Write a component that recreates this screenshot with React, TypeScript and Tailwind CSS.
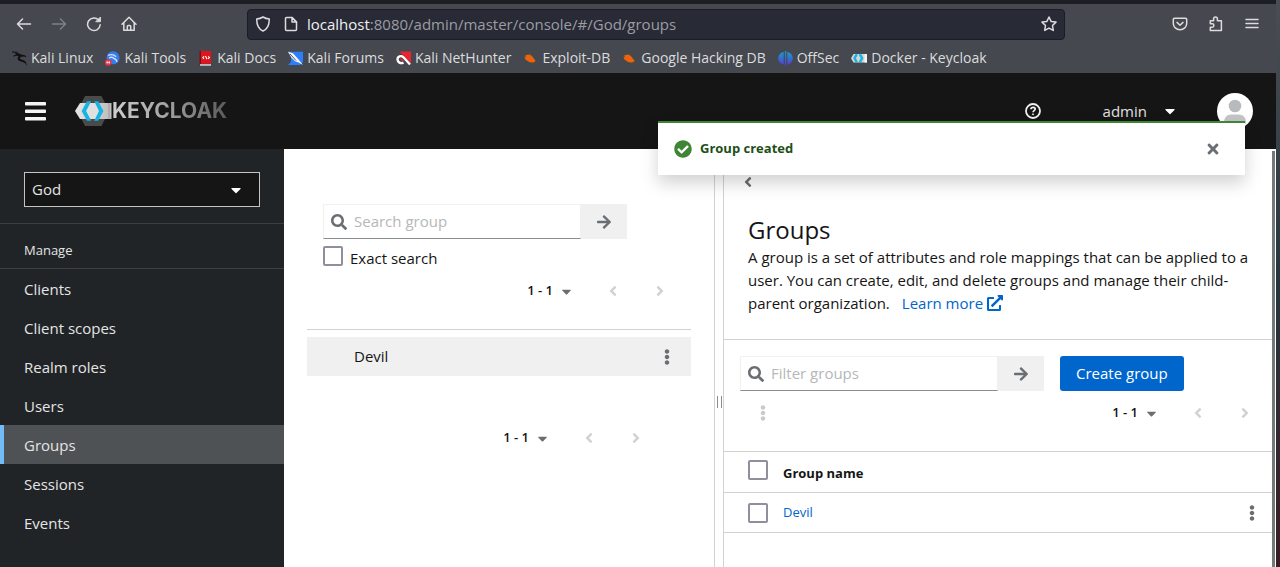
import React from "react";
import {
  FaAngleLeft,
  FaAngleRight,
  FaArrowRight,
  FaCaretDown,
  FaCheckCircle,
  FaEllipsisV,
  FaExternalLinkAlt,
  FaSearch,
  FaTimes,
} from "react-icons/fa";

type IconProps = { className?: string };

const stroke = {
  fill: "none",
  stroke: "currentColor",
  strokeWidth: 1.5,
  strokeLinecap: "round" as const,
  strokeLinejoin: "round" as const,
};

function BackIcon({ className = "size-4" }: IconProps) {
  return (
    <svg viewBox="0 0 16 16" className={className} {...stroke} aria-hidden="true">
      <path d="M14.5 8H1.5M6.5 3L1.5 8l5 5" />
    </svg>
  );
}

function ForwardIcon({ className = "size-4" }: IconProps) {
  return (
    <svg viewBox="0 0 16 16" className={className} {...stroke} aria-hidden="true">
      <path d="M1.5 8h13M9.5 3l5 5-5 5" />
    </svg>
  );
}

function ReloadIcon() {
  return (
    <svg viewBox="0 0 16 16" className="size-4" {...stroke} aria-hidden="true">
      <path d="M12.6 4A6.3 6.3 0 1 0 14.2 8.8" />
      <path d="M14.4 1.4v4.3h-4.3z" fill="currentColor" strokeWidth="1" />
    </svg>
  );
}

function HomeIcon() {
  return (
    <svg viewBox="0 0 16 16" className="size-4" {...stroke} aria-hidden="true">
      <path d="M1 8.2L8 1.3l7 6.9" />
      <path d="M2.8 7v7.3h10.4V7" />
      <path d="M6.3 14v-3.6a1 1 0 0 1 1-1h1.4a1 1 0 0 1 1 1V14" />
    </svg>
  );
}

function ShieldIcon() {
  return (
    <svg viewBox="0 0 16 16" className="size-4" {...stroke} aria-hidden="true">
      <path d="M8 1c2 1.3 4.200 1.900 6.300 2.100C14.300 9 12 13.500 8 15 4 13.500 1.700 9 1.700 3.100 3.800 2.900 6 2.300 8 1z" />
    </svg>
  );
}

function PageIcon() {
  return (
    <svg viewBox="0 0 16 16" className="size-4" {...stroke} aria-hidden="true">
      <path d="M9 1.500H3.500a1 1 0 0 0-1 1v11a1 1 0 0 0 1 1h9a1 1 0 0 0 1-1V6z" />
      <path d="M9 1.500V6h4.500z" />
    </svg>
  );
}

function StarIcon() {
  return (
    <svg viewBox="0 0 16 16" className="size-4" {...stroke} aria-hidden="true">
      <path d="M8 1l2.100 4.400 4.900.7-3.500 3.400.8 4.900L8 12.100l-4.300 2.300.8-4.900L1 6.100l4.900-.7z" />
    </svg>
  );
}

function PocketIcon() {
  return (
    <svg viewBox="0 0 16 16" className="size-4" {...stroke} aria-hidden="true">
      <path d="M2.500 2.300h11a1.200 1.200 0 0 1 1.200 1.200v4a6.700 6.200 0 0 1-13.400 0v-4a1.200 1.200 0 0 1 1.200-1.200z" />
      <path d="M5 6.400l3 2.800 3-2.800" />
    </svg>
  );
}

function PuzzleIcon() {
  return (
    <svg viewBox="0 0 16 16" className="size-4" {...stroke} aria-hidden="true">
      <path d="M5.600 4.700V2.900a1.900 1.900 0 0 1 3.800 0v1.800h4v9.800H2.300v-3.300h1.900a1.700 1.700 0 0 0 0-3.400H2.300V4.700z" />
    </svg>
  );
}

function MenuIcon() {
  return (
    <svg viewBox="0 0 16 16" className="size-4" {...stroke} aria-hidden="true">
      <path d="M2 3.500h12M2 7.500h12M2 11.500h12" />
    </svg>
  );
}

function KaliIcon() {
  return (
    <svg viewBox="0 0 15 15" className="size-[15px]" aria-hidden="true">
      <path d="M0 1l5.500.2M1.500 5.300l2.500-1.300 3 .4" fill="none" stroke="#111214" strokeWidth="1.100" />
      <path d="M2.500 1.300l4 1 3.500 1.400 3 .6 1.600 1.900-2.800-.6-2 .2c-1.800.2-2.300 1.400-1.500 2.300l4 1.300c1.600.7 2.300 2.800 2.600 5.600-1-2-2-3.200-3.600-3.800L7.500 10C5.200 8.900 5 6.600 6.500 5.200L4.500 4z" fill="#111214" />
    </svg>
  );
}

function ToolsIcon() {
  return (
    <svg viewBox="0 0 15 15" className="size-[15px]" aria-hidden="true">
      <circle cx="8" cy="6.800" r="6.500" fill="#367bf0" />
      <path d="M3 4.500c3-1.300 6-1 8 1.200M4 7c2.500-1.500 4-.5 5 .5 1.500.3 2.600 1.500 3 3.500" fill="none" stroke="#cfe0ff" strokeWidth="1.300" />
      <rect x="0" y="8.300" width="6.500" height="6.500" rx="3" fill="#e8343f" />
      <path d="M2.200 10.200v2.500M4.300 10.200v2.500M1.500 11.400H5" stroke="#fff" strokeWidth=".7" />
    </svg>
  );
}

function DocsIcon() {
  return (
    <svg viewBox="0 0 15 15" className="size-[15px]" aria-hidden="true">
      <path d="M1.500 0h2v14h-2z" fill="#7c1016" />
      <path d="M3 0h10v12.800H3z" fill="#e0141c" />
      <path d="M2 13.200h11v1.500H2z" fill="#d8d8d8" />
      <path d="M6 5.300L4.800 6.600 6 8M10.200 5.300l1.200 1.300L10.200 8M7 5.200c1.200.2 1 1.300 2 2.900" fill="none" stroke="#fff" strokeWidth="1.100" />
    </svg>
  );
}

function ForumsIcon() {
  return (
    <svg viewBox="0 0 15 15" className="size-[15px]" aria-hidden="true">
      <path d="M0 .7h15v10.300l-3 3H0l3-3V5z" fill="#2a7fff" />
      <path d="M0 .7l5 1.600 5.200 5.700 4.800 6-4.500-2.600-3.500-1.200L3.300 6.400z" fill="#f4f4f4" />
      <path d="M2 3l6 6.500" stroke="#3c3f46" strokeWidth=".9" />
    </svg>
  );
}

function NetHunterIcon() {
  return (
    <svg viewBox="0 0 15 15" className="size-[15px]" aria-hidden="true">
      <path d="M3.500.5H15v12z" fill="#e8262f" />
      <path d="M14 13.500L7.500 6.300C5 4 1.500 5.400 1.500 8.400c.1 3 3 4.500 6 3.200" fill="none" stroke="#fff" strokeWidth="2.300" />
      <path d="M4.300 7.700l3 2.300" stroke="#e8262f" strokeWidth="1.700" />
    </svg>
  );
}

function ExploitIcon() {
  return (
    <svg viewBox="0 0 15 15" className="size-[15px]" aria-hidden="true">
      <path d="M1.500 6l1.500-2 4.500-.5 2 2.300 3.200 4.200-2.700 1.800-4-.8-3.500-2.500z" fill="#e8650e" />
      <path d="M7 3.500l2.500 1.300M1 5l2 .8M9.500 12l3-.4" stroke="#7a4320" strokeWidth=".8" />
    </svg>
  );
}

function OffSecIcon() {
  return (
    <svg viewBox="0 0 15 15" className="size-[15px]" aria-hidden="true">
      <defs>
        <linearGradient id="offsec" x1="0" y1="0" x2="0" y2="15" gradientUnits="userSpaceOnUse">
          <stop offset="0" stopColor="#12a5c8" />
          <stop offset="1" stopColor="#5a35d6" />
        </linearGradient>
      </defs>
      <g fill="url(#offsec)">
        <path d="M5.700 1v12.500C2.300 13 .3 10.500.3 7.300S2.300 1.600 5.700 1z" />
        <path d="M9.300 1c3.400.6 5.400 3.100 5.400 6.300s-2 5.700-5.400 6.200z" />
        <path d="M6.900 0h1.300v15H6.900z" />
      </g>
    </svg>
  );
}

function DockerIcon() {
  return (
    <svg viewBox="0 0 16 15" className="h-[15px] w-4" aria-hidden="true">
      <path d="M2.500 3H16v8.500H2.500L0 7.300z" fill="#d6d6d6" />
      <path d="M5.800 3.200L3.500 7.300l2.300 4.100M8.800 3.200l2.300 4.100-2.300 4.100" fill="none" stroke="#19b5e0" strokeWidth="2.400" />
      <path d="M13.500 3H16v8.500h-2.500z" fill="#f4f4f4" />
    </svg>
  );
}

const bookmarks = [
  { label: "Kali Linux", Icon: KaliIcon },
  { label: "Kali Tools", Icon: ToolsIcon },
  { label: "Kali Docs", Icon: DocsIcon },
  { label: "Kali Forums", Icon: ForumsIcon },
  { label: "Kali NetHunter", Icon: NetHunterIcon },
  { label: "Exploit-DB", Icon: ExploitIcon },
  { label: "Google Hacking DB", Icon: ExploitIcon },
  { label: "OffSec", Icon: OffSecIcon },
  { label: "Docker - Keycloak", Icon: DockerIcon },
];

function BrowserChrome() {
  return (
    <div className="border-t-4 border-[#1c1e24] bg-[#45484f] text-[#dcdcde]">
      <div className="flex h-10 items-center">
        <div className="flex w-[247px] shrink-0 items-center gap-[19px] pl-4">
          <button type="button" aria-label="Back"><BackIcon /></button>
          <button type="button" aria-label="Forward" disabled className="text-[#7d8087]"><ForwardIcon /></button>
          <button type="button" aria-label="Reload"><ReloadIcon /></button>
          <button type="button" aria-label="Home"><HomeIcon /></button>
        </div>
        <div className="flex h-[31px] min-w-0 flex-1 items-center rounded-sm border border-[#1b1c25] bg-[#282a36] px-[7px]">
          <ShieldIcon />
          <span className="ml-3"><PageIcon /></span>
          <p className="ml-2 flex-1 truncate text-[15px] text-[#9c9da3]">
            <span className="text-[#f0f0f2]">localhost</span>:8080/admin/master/console/#/God/groups
          </p>
          <button type="button" aria-label="Bookmark this page"><StarIcon /></button>
        </div>
        <div className="flex w-[211px] shrink-0 items-center justify-end gap-5 pr-4">
          <button type="button" aria-label="Save to Pocket"><PocketIcon /></button>
          <button type="button" aria-label="Extensions"><PuzzleIcon /></button>
          <button type="button" aria-label="Application menu"><MenuIcon /></button>
        </div>
      </div>
      <nav aria-label="Bookmarks" className="flex h-[29px] items-center gap-3 pb-px pl-3 text-sm">
        {bookmarks.map(({ label, Icon }) => (
          <a key={label} href="#" className="flex items-center gap-1 whitespace-nowrap">
            <Icon />
            {label}
          </a>
        ))}
      </nav>
    </div>
  );
}

function KeycloakLogo() {
  return (
    <a href="#" aria-label="Keycloak home" className="flex items-center">
      <svg viewBox="0 0 37 30" className="h-[30px] w-[37px]" aria-hidden="true">
        <defs>
          <linearGradient id="band" x1="0" y1="0" x2="1" y2="0">
            <stop offset="0" stopColor="#e6e6e6" />
            <stop offset="1" stopColor="#bdbdbd" />
          </linearGradient>
        </defs>
        <path d="M10 0h16.500l7.500 15-7.500 15H10L2.500 15z" fill="#4a4a4a" />
        <path d="M5 7h31.500v16H5L0 15z" fill="url(#band)" />
        <path d="M13.500 7h9l4.500 8-4.500 8h-9L9 15z" fill="#e0e0e0" />
        <path d="M12 5.300h4.200L11.100 15l5.100 9.700H12L6.600 15z" fill="#16b4e2" />
        <path d="M19.200 5.300h4L28.500 15l-5.300 9.700h-4L24 15z" fill="#16b4e2" />
        <path d="M33.500 7h1v16h-1z" fill="#9a9a9a" />
      </svg>
      <span className="bg-linear-to-r from-[#cfcfcf] via-[#a0a0a0] to-[#5a5a5a] bg-clip-text font-['Inter',sans-serif] text-[21px] leading-7 font-bold text-transparent">
        KEYCLOAK
      </span>
    </a>
  );
}

function Toast() {
  return (
    <div
      role="status"
      className="absolute top-12 right-[31px] z-10 flex h-[54px] w-[587px] items-center border-t-2 border-[#3e8635] bg-white px-4 shadow-[0_8px_16px_rgba(3,3,3,0.18)]"
    >
      <FaCheckCircle className="size-[18px] text-[#3e8635]" />
      <p className="ml-2 flex-1 text-[13px] font-bold text-[#1e4f18]">Group created</p>
      <button type="button" aria-label="Close" className="px-2 text-[#6a6e73]">
        <FaTimes className="size-4" />
      </button>
    </div>
  );
}

function Masthead() {
  return (
    <header className="relative flex h-[76px] shrink-0 items-center bg-[#151515] pr-[23px] pl-6 text-[#e0e0e0]">
      <button type="button" aria-label="Toggle navigation" className="mr-[29px]">
        <svg viewBox="0 0 22 20" className="h-5 w-[22px]" fill="#f5f5f5" aria-hidden="true">
          <rect x="1" y="1" width="21" height="3.500" rx=".8" />
          <rect x="1" y="8.500" width="21" height="3.500" rx=".8" />
          <rect x="1" y="16" width="21" height="3.500" rx=".8" />
        </svg>
      </button>
      <KeycloakLogo />
      <div className="ml-auto flex items-center">
        <button type="button" aria-label="Help">
          <svg viewBox="0 0 16 16" className="size-4" fill="none" stroke="#f0f0f0" aria-hidden="true">
            <circle cx="8" cy="8" r="7" strokeWidth="1.800" />
            <path d="M5.900 6.300C6 5 6.900 4.300 8.100 4.300c1.200 0 2.100.7 2.100 1.800C10.200 7.600 8 7.600 8 9.300" strokeWidth="1.700" />
            <circle cx="8" cy="11.300" r=".6" fill="#f0f0f0" strokeWidth=".8" />
          </svg>
        </button>
        <button type="button" className="ml-[62px] flex items-center gap-[15px] text-[15px]">
          admin
          <FaCaretDown className="size-4 text-white" />
        </button>
        <svg viewBox="0 0 36 36" className="ml-[39px] size-9" role="img" aria-label="User avatar">
          <circle cx="18" cy="18" r="18" fill="#fff" />
          <circle cx="18" cy="13" r="6.300" fill="#b8bbbe" />
          <path d="M7 30c0-5 2.500-8.500 7-8.500h8c4.500 0 7 3.500 7 8.500-3 3-7 4.500-11 4.500S10 33 7 30z" fill="#c3c5c8" />
        </svg>
      </div>
      <Toast />
    </header>
  );
}

const navItems = ["Clients", "Client scopes", "Realm roles", "Users", "Groups", "Sessions", "Events"];

function Sidebar() {
  return (
    <aside className="w-[284px] shrink-0 bg-[#212427] text-[#e4e4e4]">
      <div className="border-b border-[#3c3f42] px-6 pt-[23px] pb-4">
        <div className="relative">
          <select
            aria-label="Realm"
            className="h-[35px] w-full appearance-none border border-[#c4c4c4] bg-[#151515] px-[7px] text-[15px]"
          >
            <option>God</option>
          </select>
          <FaCaretDown className="pointer-events-none absolute top-[10px] right-4 size-4 text-white" />
        </div>
      </div>
      <h2 className="border-b border-[#3c3f42] px-6 pt-4 pb-2 text-[13px] leading-5">Manage</h2>
      <nav aria-label="Manage">
        {navItems.map((item) =>
          item === "Groups" ? (
            <a key={item} href="#" aria-current="page" className="flex h-[39px] items-center border-l-4 border-[#73bcf7] bg-[#4f5255] pt-px pl-5 text-[15px]">
              {item}
            </a>
          ) : (
            <a key={item} href="#" className="flex h-[39px] items-center pt-px pl-6 text-[15px]">
              {item}
            </a>
          ),
        )}
      </nav>
    </aside>
  );
}

function SearchBox({ placeholder }: { placeholder: string }) {
  return (
    <form className="flex h-[35px] w-[304px]" onSubmit={(e) => e.preventDefault()}>
      <label className="flex min-w-0 flex-1 items-center gap-[7px] border border-[#f0f0f0] border-b-[#8a8d90] bg-white pl-[7px]">
        <FaSearch className="size-4 shrink-0 text-[#6a6e73]" />
        <input
          type="search"
          aria-label={placeholder}
          placeholder={placeholder}
          className="w-full min-w-0 text-[15px] outline-none placeholder:text-[#b5b7b9]"
        />
      </label>
      <button type="submit" aria-label="Search" className="flex w-[46px] items-center justify-center bg-[#f0f0f0] text-[#6a6e73]">
        <FaArrowRight className="size-4" />
      </button>
    </form>
  );
}

function Pagination() {
  return (
    <div className="flex h-5 items-center">
      <button type="button" className="flex items-center gap-[6px] text-[13px] font-semibold text-[#151515]">
        1 - 1
        <FaCaretDown className="size-[15px] text-[#6a6e73]" />
      </button>
      <button type="button" aria-label="Previous page" disabled className="ml-[31px] text-[#d2d2d2]">
        <FaAngleLeft className="size-4" />
      </button>
      <button type="button" aria-label="Next page" disabled className="ml-[31px] text-[#d2d2d2]">
        <FaAngleRight className="size-4" />
      </button>
    </div>
  );
}

const checkbox = "size-5 shrink-0 appearance-none rounded-xs border-2 border-[#8f8f9d] bg-white";

function GroupTree() {
  return (
    <section aria-label="Group tree" className="min-w-0 flex-1 pr-[23px] pl-[23px] pt-[55px]">
      <div className="pl-4">
        <SearchBox placeholder="Search group" />
        <div className="mt-[7px] flex gap-[7px]">
          <input id="exact" type="checkbox" className={checkbox} />
          <label htmlFor="exact" className="pt-px text-[15px] leading-[22px]">Exact search</label>
        </div>
      </div>
      <div className="mt-3 flex justify-end pr-[23px]">
        <Pagination />
      </div>
      <ul className="mt-7 border-t border-[#d2d2d2] pt-[7px]">
        <li className="flex h-[39px] items-center bg-[#f0f0f0] pr-4 pl-[47px]">
          <a href="#" className="flex-1 text-[15px]">Devil</a>
          <button type="button" aria-label="Devil actions" className="text-[#6a6e73]">
            <FaEllipsisV className="size-4" />
          </button>
        </li>
      </ul>
      <div className="mt-13 flex justify-end pr-[47px]">
        <Pagination />
      </div>
    </section>
  );
}

function Splitter() {
  return (
    <div role="separator" aria-orientation="vertical" className="flex w-[10px] shrink-0 justify-center border-x border-[#d2d2d2] pt-[247px]">
      <span className="h-3 w-[5px] border-x border-[#8a8d90]" />
    </div>
  );
}

function GroupDetail() {
  return (
    <section aria-labelledby="groups-title" className="w-[548px] shrink-0">
      <div className="border-b border-[#d2d2d2] pt-[25px] pr-5 pb-6 pl-6">
        <button type="button" aria-label="Hide tree" className="-ml-3 block px-1 text-[#6a6e73]">
          <FaAngleLeft className="size-4" />
        </button>
        <h1 id="groups-title" className="mt-6 text-2xl leading-8 font-medium">Groups</h1>
        <p className="text-[15px] leading-[23px]">
          A group is a set of attributes and role mappings that can be applied to a user. You can create, edit, and delete groups and manage their child-parent organization.
          <a href="#" className="ml-3 text-[#0066cc]">
            Learn more
            <FaExternalLinkAlt className="ml-1 inline size-4 align-[-2px]" />
          </a>
        </p>
      </div>
      <div className="pt-4 pr-[19px] pb-7 pl-4">
        <div className="flex gap-4">
          <SearchBox placeholder="Filter groups" />
          <button type="button" className="rounded-[3px] bg-[#0066cc] px-4 text-[15px] text-white">Create group</button>
        </div>
        <div className="mt-3 flex h-5 items-center justify-between pl-[15px]">
          <button type="button" aria-label="Bulk actions" disabled className="text-[#c8cacc]">
            <FaEllipsisV className="size-4" />
          </button>
          <Pagination />
        </div>
      </div>
      <table className="w-full border-collapse text-left text-[13px]">
        <thead>
          <tr className="h-[41px] border-y border-[#d2d2d2]">
            <th className="w-[59px] pb-1 pl-6">
              <input type="checkbox" aria-label="Select all groups" className={`${checkbox} block`} />
            </th>
            <th scope="col" className="pt-1 font-bold">Group name</th>
            <th className="w-12" aria-label="Actions" />
          </tr>
        </thead>
        <tbody>
          <tr className="h-10 border-b border-[#d2d2d2]">
            <td className="pl-6">
              <input type="checkbox" aria-label="Select Devil" className={`${checkbox} block`} />
            </td>
            <td><a href="#" className="text-[#0066cc]">Devil</a></td>
            <td className="pl-5">
              <button type="button" aria-label="Devil row actions" className="block text-[#6a6e73]">
                <FaEllipsisV className="size-4" />
              </button>
            </td>
          </tr>
        </tbody>
      </table>
    </section>
  );
}

export default function App() {
  return (
    <div className="flex min-h-screen bg-white font-['Open_Sans','Noto_Sans',sans-serif] text-[#151515]">
      <div className="flex min-w-0 flex-1 flex-col">
        <BrowserChrome />
        <Masthead />
        <div className="flex flex-1">
          <Sidebar />
          <main className="flex min-w-0 flex-1">
            <GroupTree />
            <Splitter />
            <GroupDetail />
            <div className="w-1 shrink-0 pt-0.5 pr-px"><div className="h-full bg-[#737b79]" /></div>
          </main>
        </div>
      </div>
      <div className="w-1 shrink-0 bg-linear-to-b from-[#4a4e53] via-[#26363e] to-[#3a1c26]" />
    </div>
  );
}
